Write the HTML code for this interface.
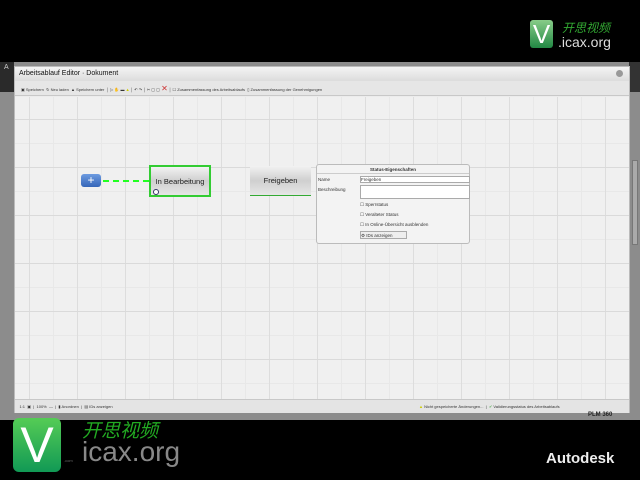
<!DOCTYPE html>
<html><head><meta charset="utf-8"><style>
*{margin:0;padding:0;box-sizing:border-box}
body{width:640px;height:480px;background:#000;position:relative;overflow:hidden;font-family:"Liberation Sans",sans-serif}
.abs{position:absolute}
.bgapp{left:0;top:62px;width:640px;height:358px;background:#8c8c8c}
.dlg{left:14px;top:66px;width:616px;height:347px;background:#ececec;border:1px solid #bbb}
.title{left:0;top:0;width:100%;height:14px;background:linear-gradient(#f4f4f4,#dcdcdc);font-size:7px;line-height:14px;padding-left:4px;color:#111}
.tb{left:0;top:14px;width:100%;height:15px;background:#e6e6e6;border-bottom:1px solid #c8c8c8;font-size:4px;color:#333;line-height:15px;white-space:nowrap;padding-left:6px}
.canvas{left:0;top:30px;width:100%;height:302px;background-color:#f0f0f0;
background-image:linear-gradient(#dadada 1px,transparent 1px),linear-gradient(90deg,#dddddd 1px,transparent 1px),linear-gradient(#e8e8e8 1px,transparent 1px),linear-gradient(90deg,#e8e8e8 1px,transparent 1px);
background-size:48px 48px,48px 48px,24px 24px,24px 24px;background-position:0 22px,14px 0,0 22px,14px 0}
.status{left:0;top:332px;width:100%;height:14px;background:#e4e4e4;border-top:1px solid #c8c8c8;font-size:4px;line-height:14px;color:#333}
.node{background:linear-gradient(#f2f2f2,#cfcfcf 50%,#e6e6e6);font-size:7.5px;color:#222;text-align:center;line-height:30px}
.panel{background:#f3f3f3;border:1px solid #bbb;border-radius:3px;font-size:4.5px;color:#333}
</style></head><body>
<div class="abs bgapp"></div>
<div class="abs" style="left:629px;top:62px;width:11px;height:30px;background:#333"></div>
<div class="abs" style="left:632px;top:160px;width:6px;height:85px;background:#aaa;border:1px solid #777"></div>
<div class="abs" style="left:0;top:62px;width:14px;height:30px;background:#2a2a2a"></div>
<div class="abs" style="left:4px;top:64px;color:#ccc;font-size:7px">A</div>
<div class="abs dlg">
 <div class="abs title">Arbeitsablauf Editor · Dokument<span style="position:absolute;right:6px;top:3px;width:7px;height:7px;border-radius:50%;background:#999"></span></div>
 <div class="abs tb">▣ Speichern &nbsp;↻ Neu laden &nbsp;▲ Speichern unter &nbsp;│ ▷ ✋ ▬ <span style="color:#cc0">▲</span> │ ↶ ↷ │ ✂ ▢ ▢ <span style="color:#c33;font-size:8px">✕</span> │ ☐ Zusammenfassung des Arbeitsablaufs &nbsp;▯ Zusammenfassung der Genehmigungen</div>
 <div class="abs canvas">
  <div class="abs" style="left:66px;top:77px;width:20px;height:13px;border-radius:3px;background:linear-gradient(#6d9be0,#3566b8);color:#fff;font-size:12px;line-height:13px;text-align:center">+</div>
  <div class="abs" style="left:88px;top:83px;width:46px;border-top:2px dashed #2f2"></div>
  <div class="abs node" style="left:134px;top:68px;width:62px;height:32px;border:2px solid #3c3">In Bearbeitung</div>
  <div class="abs" style="left:138px;top:92px;width:6px;height:6px;border-radius:50%;border:1px solid #336;background:#fff"></div>
  <div class="abs node" style="left:235px;top:69px;width:61px;height:30px;border-bottom:1px solid #3a3">Freigeben</div>
  <div class="abs panel" style="left:301px;top:67px;width:154px;height:80px">
   <div style="text-align:center;font-weight:bold;height:9px;line-height:9px;border-bottom:1px solid #ccc">Status-Eigenschaften</div>
   <div class="abs" style="left:1px;top:12px">Name</div>
   <div class="abs" style="left:43px;top:11px;width:110px;height:7px;background:#fff;border:1px solid #aaa;font-size:4.5px;line-height:6px">Freigeben</div>
   <div class="abs" style="left:1px;top:22px">Beschreibung</div>
   <div class="abs" style="left:43px;top:20px;width:110px;height:14px;background:#fff;border:1px solid #aaa"></div>
   <div class="abs" style="left:43px;top:37px">☐ Sperrstatus</div>
   <div class="abs" style="left:43px;top:47px">☐ Veralteter Status</div>
   <div class="abs" style="left:43px;top:57px">☐ In Online-Übersicht ausblenden</div>
   <div class="abs" style="left:43px;top:66px;width:47px;height:8px;border:1px solid #aaa;background:#eee;line-height:7px">⚙ IDs anzeigen</div>
  </div>
 </div>
 <div class="abs status">&nbsp;&nbsp;&nbsp;&nbsp;1:1 &nbsp;▣ &nbsp;| &nbsp;100% &nbsp;— &nbsp;| &nbsp;▮ Anordnen &nbsp;| &nbsp;▤ IDs anzeigen<span style="position:absolute;left:404px"><span style="color:#cc0">▲</span> Nicht gespeicherte Änderungen... &nbsp;| &nbsp;<span style="color:#5a5">✔</span> Validierungsstatus des Arbeitsablaufs</span></div>
</div>
<div class="abs" style="left:588px;top:412px;font-size:6px;font-weight:bold;color:#222">PLM 360</div>
<div class="abs" style="left:530px;top:20px;width:23px;height:28px;border-radius:3px;background:linear-gradient(#8c8,#284);color:#fff;font-size:26px;line-height:28px;text-align:center">V</div>
<div class="abs" style="left:562px;top:19px;color:#3a3;font-size:12px;font-style:italic;font-family:'Liberation Sans','Noto Sans CJK SC',sans-serif">开思视频</div>
<div class="abs" style="left:558px;top:34px;color:#ddd;font-size:14px">.icax.org</div>
<div class="abs" style="left:13px;top:418px;width:48px;height:54px;border-radius:6px;background:linear-gradient(#5c5,#195);color:#fff;font-size:50px;line-height:54px;text-align:center">V</div>
<div class="abs" style="left:82px;top:416px;color:#2a2;font-size:19px;font-style:italic;font-family:'Liberation Sans','Noto Sans CJK SC',sans-serif">开思视频</div>
<div class="abs" style="left:64px;top:458px;color:#666;font-size:4px">.com</div>
<div class="abs" style="left:82px;top:436px;color:#888;font-size:28px">icax.org</div>
<div class="abs" style="left:546px;top:450px;color:#eee;font-size:15px;font-weight:bold;font-family:'Liberation Sans',sans-serif">Autodesk</div>
</body></html>
